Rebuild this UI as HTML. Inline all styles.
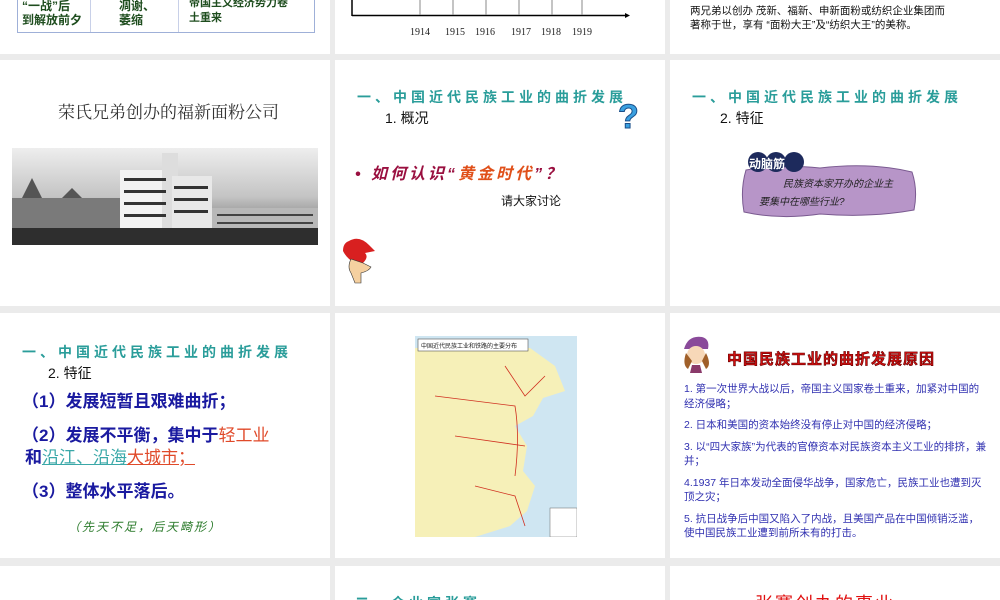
<!DOCTYPE html>
<html><head><meta charset="utf-8">
<style>
*{margin:0;padding:0;box-sizing:border-box}
body{width:1000px;height:600px;background:#ebebeb;position:relative;overflow:hidden;font-family:"Liberation Sans","Noto Sans CJK SC",sans-serif}
.s{position:absolute;background:#fff;overflow:hidden}
.a{position:absolute;white-space:nowrap}
.h{color:#2a9d9a;font-weight:bold;font-size:14px;letter-spacing:4px}
</style></head><body>

<!-- row 0 -->
<div class="s" style="left:0;top:0;width:330px;height:54px">
  <div style="position:absolute;left:17px;top:-5px;width:298px;height:38px;border:1px solid #9fb0d8;border-top:none"></div>
  <div style="position:absolute;left:90px;top:0;width:1px;height:32px;background:#c8d0e8"></div>
  <div style="position:absolute;left:178px;top:0;width:1px;height:32px;background:#c8d0e8"></div>
  <div class="a" style="left:22px;top:-1px;font-size:12px;font-weight:bold;color:#1e4d1e;line-height:14px">“一战”后<br>到解放前夕</div>
  <div class="a" style="left:119px;top:-1px;font-size:12px;font-weight:bold;color:#1e4d1e;line-height:14px">凋谢、<br>萎缩</div>
  <div class="a" style="left:189px;top:-4px;font-size:11px;font-weight:bold;color:#1e4d1e;line-height:15px">帝国主义经济势力卷<br>土重来</div>
</div>
<div class="s" style="left:335px;top:0;width:330px;height:54px">
  <svg width="330" height="54" style="position:absolute;left:0;top:0">
    <line x1="17" y1="0" x2="17" y2="16" stroke="#000" stroke-width="1.5"/>
    <line x1="17" y1="15.5" x2="290" y2="15.5" stroke="#000" stroke-width="1.5"/>
    <polygon points="290,13 295,15.5 290,18" fill="#000"/>
    <g stroke="#888" stroke-width="1"><line x1="85" y1="0" x2="85" y2="15"/><line x1="118" y1="0" x2="118" y2="15"/><line x1="151" y1="0" x2="151" y2="15"/><line x1="184" y1="0" x2="184" y2="15"/><line x1="217" y1="0" x2="217" y2="15"/><line x1="247" y1="0" x2="247" y2="15"/></g>
    <g font-family="Liberation Serif,serif" font-size="10" fill="#222"><text x="75" y="35">1914</text><text x="110" y="35">1915</text><text x="140" y="35">1916</text><text x="176" y="35">1917</text><text x="206" y="35">1918</text><text x="237" y="35">1919</text></g>
  </svg>
</div>
<div class="s" style="left:670px;top:0;width:330px;height:54px">
  <div class="a" style="left:20px;top:4px;font-size:10.5px;line-height:14px;color:#111">两兄弟以创办 茂新、福新、申新面粉或纺织企业集团而<br>著称于世，享有 “面粉大王”及“纺织大王”的美称。</div>
</div>

<!-- row 1 -->
<div class="s" style="left:0;top:60px;width:330px;height:246px">
  <div class="a" style="left:58px;top:38px;font-size:17px;color:#333;font-family:'Liberation Serif','Noto Serif CJK SC',serif">荣氏兄弟创办的福新面粉公司</div>
  <svg style="position:absolute;left:12px;top:88px" width="306" height="97">
    <defs><linearGradient id="g" x1="0" y1="0" x2="0" y2="1"><stop offset="0" stop-color="#eeeeee"/><stop offset="0.5" stop-color="#c4c4c4"/><stop offset="1" stop-color="#555"/></linearGradient></defs>
    <rect width="306" height="97" fill="url(#g)"/>
    <rect x="108" y="22" width="50" height="60" fill="#f2f2f2"/>
    <rect x="150" y="5" width="16" height="75" fill="#ddd"/>
    <rect x="160" y="28" width="40" height="52" fill="#e8e8e8"/>
    <g fill="#333"><rect x="112" y="30" width="42" height="3"/><rect x="112" y="42" width="42" height="3"/><rect x="112" y="54" width="42" height="3"/><rect x="112" y="66" width="42" height="3"/><rect x="162" y="38" width="34" height="3"/><rect x="162" y="50" width="34" height="3"/><rect x="162" y="62" width="34" height="3"/></g>
    <rect x="200" y="60" width="106" height="22" fill="#b8b8b8"/>
    <g fill="#444"><rect x="205" y="66" width="96" height="2"/><rect x="205" y="74" width="96" height="2"/></g>
    <rect x="0" y="50" width="108" height="32" fill="#7a7a7a"/>
    <path d="M10 50 L20 30 L30 50 Z M50 50 L60 40 L70 50Z" fill="#555"/>
    <rect x="0" y="80" width="306" height="17" fill="#2e2e2e"/>
  </svg>
</div>
<div class="s" style="left:335px;top:60px;width:330px;height:246px">
  <div class="a h" style="left:22px;top:27px">一、中国近代民族工业的曲折发展</div>
  <div class="a" style="left:50px;top:48px;font-size:14px;color:#111">1. 概况</div>
  <div class="a" style="left:283px;top:38px;font-size:34px;font-weight:bold;color:#3aa0e0;-webkit-text-stroke:1px #1a4f8a">?</div>
  <div class="a" style="left:20px;top:100px;font-size:16px;font-style:italic;font-weight:bold;color:#9a1040;letter-spacing:3px">• 如何认识“<span style="color:#e0501a">黄金时代</span>”？</div>
  <div class="a" style="left:166px;top:132px;font-size:12px;color:#111">请大家讨论</div>
  <svg style="position:absolute;left:6px;top:177px" width="36" height="48">
    <path d="M8 4 Q18 -2 28 8 L34 14 L24 16 Q28 20 22 26 L14 26 Q6 22 2 14 Q2 6 8 4Z" fill="#d82020"/>
    <path d="M10 22 Q6 30 10 36 L14 46 L20 46 L20 36 Q28 34 30 30 L22 26Z" fill="#f5d0a0" stroke="#333" stroke-width="0.6"/>
  </svg>
</div>
<div class="s" style="left:670px;top:60px;width:330px;height:246px">
  <div class="a h" style="left:22px;top:27px">一、中国近代民族工业的曲折发展</div>
  <div class="a" style="left:50px;top:48px;font-size:14px;color:#111">2. 特征</div>
  <svg style="position:absolute;left:70px;top:90px" width="180" height="70">
    <path d="M6 20 Q40 14 80 18 Q130 12 172 22 Q178 40 174 60 Q130 68 80 64 Q40 70 4 62 Q0 40 6 20Z" fill="#b795c8" stroke="#7a5a90" stroke-width="1"/>
    <circle cx="18" cy="12" r="10" fill="#1d2a5c"/><circle cx="36" cy="12" r="10" fill="#1d2a5c"/><circle cx="54" cy="12" r="10" fill="#1d2a5c"/>
  </svg>
  <div class="a" style="left:79px;top:95px;font-size:12px;font-weight:bold;color:#fff">动脑筋</div>
  <div class="a" style="left:113px;top:117px;font-size:10px;color:#222;font-style:italic;line-height:16px">民族资本家开办的企业主</div>
  <div class="a" style="left:89px;top:133px;font-size:10px;color:#222;font-style:italic">要集中在哪些行业?</div>
</div>

<!-- row 2 -->
<div class="s" style="left:0;top:313px;width:330px;height:245px">
  <div class="a h" style="left:22px;top:29px">一、中国近代民族工业的曲折发展</div>
  <div class="a" style="left:48px;top:50px;font-size:14px;color:#111">2. 特征</div>
  <div class="a" style="left:22px;top:74px;font-size:17px;font-weight:bold;color:#1a1aa0">（1）发展短暂且艰难曲折；</div>
  <div class="a" style="left:22px;top:108px;font-size:17px;font-weight:bold;color:#1a1aa0">（2）发展不平衡，集中于<span style="color:#e04a2a;font-weight:normal">轻工业</span></div>
  <div class="a" style="left:25px;top:130px;font-size:17px;font-weight:bold;color:#1a1aa0">和<span style="color:#3aa8a8;font-weight:normal;text-decoration:underline">沿江、沿海</span><span style="color:#e04a2a;font-weight:normal;text-decoration:underline">大城市；</span></div>
  <div class="a" style="left:22px;top:164px;font-size:17px;font-weight:bold;color:#1a1aa0">（3）整体水平落后。</div>
  <div class="a" style="left:68px;top:205px;font-size:12px;font-style:italic;color:#2a7a2a;letter-spacing:2px">（先天不足，后天畸形）</div>
</div>
<div class="s" style="left:335px;top:313px;width:330px;height:245px">
  <svg style="position:absolute;left:80px;top:23px" width="162" height="201">
    <rect width="162" height="201" fill="#cfe6f2"/>
    <path d="M0 12 L115 12 L140 30 L150 55 L128 62 L118 80 L100 90 L112 110 L108 135 L120 150 L112 175 L95 190 L60 201 L0 201Z" fill="#f6f0b8"/>
    <rect x="3" y="3" width="110" height="12" fill="#fff" stroke="#555" stroke-width="0.6"/>
    <text x="6" y="12" font-size="6" fill="#222">中国近代民族工业和铁路的主要分布</text>
    <g stroke="#d03020" stroke-width="0.8" fill="none"><path d="M20 60 Q60 65 100 70 Q105 100 100 140"/><path d="M40 100 L110 110"/><path d="M90 30 L110 60 L130 40"/><path d="M60 150 L100 160 L110 190"/></g>
    <rect x="135" y="172" width="27" height="29" fill="#fff" stroke="#666" stroke-width="0.5"/>
  </svg>
</div>
<div class="s" style="left:670px;top:313px;width:330px;height:245px">
  <svg style="position:absolute;left:10px;top:22px" width="36" height="38">
    <path d="M4 14 Q8 0 22 2 Q30 4 28 14Z" fill="#8a4a9a"/>
    <circle cx="16" cy="20" r="9" fill="#f7d8b8"/>
    <path d="M6 18 Q2 30 8 34 L12 26Z M26 18 Q32 30 26 34 L22 26Z" fill="#a0602a"/>
    <path d="M12 30 L20 30 L22 38 L10 38Z" fill="#8a3a6a"/>
  </svg>
  <div class="a" style="left:57px;top:35px;font-size:15px;font-weight:bold;color:#d01010;-webkit-text-stroke:0.6px #600;letter-spacing:1px">中国民族工业的曲折发展原因</div>
  <div style="position:absolute;left:14px;top:69px;width:305px;font-size:10.5px;line-height:14.5px;color:#3030b0">
    <p style="margin-bottom:7px">1. 第一次世界大战以后，帝国主义国家卷土重来，加紧对中国的经济侵略；</p>
    <p style="margin-bottom:7px">2. 日本和美国的资本始终没有停止对中国的经济侵略；</p>
    <p style="margin-bottom:7px">3. 以“四大家族”为代表的官僚资本对民族资本主义工业的排挤，兼并；</p>
    <p style="margin-bottom:7px">4.1937 年日本发动全面侵华战争，国家危亡，民族工业也遭到灭顶之灾；</p>
    <p>5. 抗日战争后中国又陷入了内战，且美国产品在中国倾销泛滥，使中国民族工业遭到前所未有的打击。</p>
  </div>
</div>

<!-- row 3 -->
<div class="s" style="left:0;top:566px;width:330px;height:34px"></div>
<div class="s" style="left:335px;top:566px;width:330px;height:34px">
  <div class="a h" style="left:20px;top:27px">二、企业家张謇</div>
</div>
<div class="s" style="left:670px;top:566px;width:330px;height:34px">
  <div class="a" style="left:85px;top:24px;font-size:18px;color:#e01010;letter-spacing:2px">张謇创办的事业</div>
</div>
</body></html>
